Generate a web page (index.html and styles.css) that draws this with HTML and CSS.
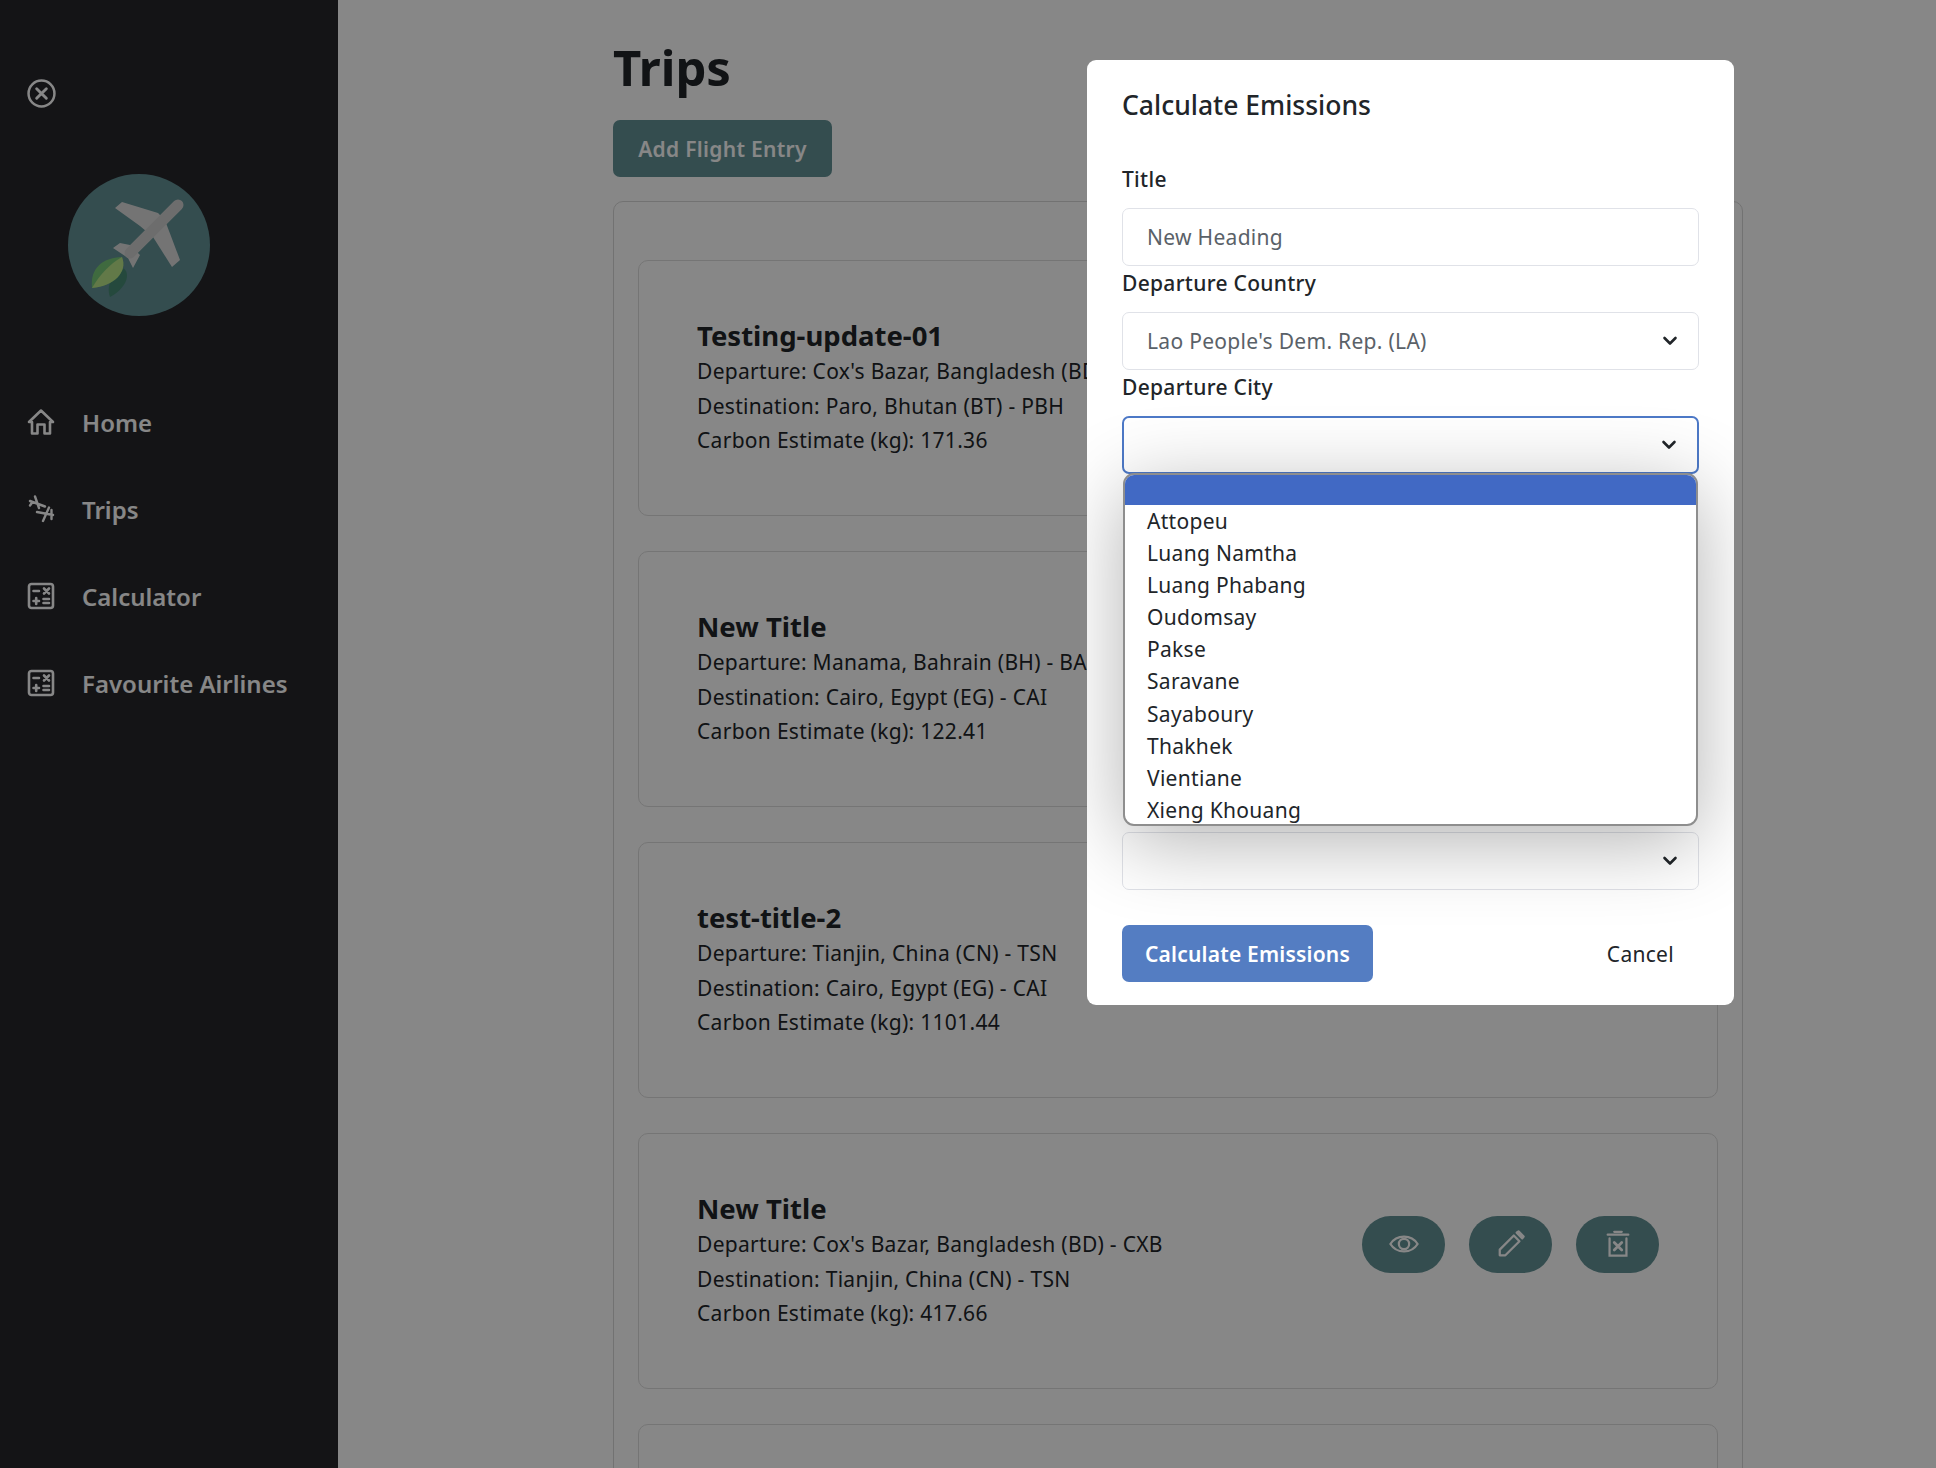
FILE: index.html
```html
<!DOCTYPE html>
<html lang="en">
<head>
  <meta charset="UTF-8" />
  <meta name="viewport" content="width=device-width, initial-scale=1.0" />
  <title>Trips</title>
  <link rel="stylesheet" href="styles.css">
</head>
<body>
  <div class="layout">
    <aside class="sidebar">
      <svg class="close-icon" viewBox="0 0 30 30" fill="none" stroke="#fff" stroke-width="2.600" stroke-linecap="round">
        <circle cx="15" cy="15" r="13.400"/>
        <path d="M10 10l10 10M20 10l-10 10" stroke-width="3"/>
      </svg>

      <svg class="logo" viewBox="0 0 142 142">
        <circle cx="71" cy="71" r="71" fill="#629195"/>
        <path d="M42 123C38 112 44 100 54 94C62 96 62 112 42 123Z" fill="#468a74"/>
        <path d="M24 114C22 94 34 84 54 83C60 98 46 112 24 114Z" fill="#78c878"/>
        <path d="M24 114C32 100 42 90 54 83C60 98 46 112 24 114Z" fill="#d6f08e" opacity=".7"/>
        <g fill="#dcdcdc">
          <path d="M47 34L54 28L90 39L99 48L85 63L72 52Z"/>
          <path d="M85 63L98 49L112 86L104 93Z"/>
          <path d="M45 74L52 69L62 71L72 81L65 94L60 84Z"/>
        </g>
        <path d="M110 31L62 79" stroke="#cfcfcf" stroke-width="11" stroke-linecap="round"/>
      </svg>

      <nav class="nav">
        <a class="nav-item">
          <svg class="nav-icon" viewBox="0 0 28 28" fill="none" stroke="#fff" stroke-width="2.600" stroke-linejoin="round" stroke-linecap="round">
            <path d="M2 14L14 2.500L26 14H23V25.500H17.500V16.500H10.500V25.500H5V14Z"/>
          </svg>
          Home
        </a>
        <a class="nav-item">
          <svg class="nav-icon" viewBox="0 0 28 28" fill="none" stroke="#fff" stroke-width="2.400" stroke-linecap="round" stroke-linejoin="round">
            <path d="M3 6L18 11.500M8 1.500L12 13M3 10.500L5.500 7"/>
            <path d="M10 17L26 20M22 12.500L16 26M24.500 15V24"/>
          </svg>
          Trips
        </a>
        <a class="nav-item">
          <svg class="nav-icon" viewBox="0 0 28 28" fill="none" stroke="#fff" stroke-width="2.600" stroke-linecap="round">
            <rect x="2" y="2" width="24" height="24" rx="2.500"/>
            <path d="M6.500 9H12M17 6.500L22 11.500M22 6.500L17 11.500M6.500 19H12M9.200 16V22M16.500 17H22M16.500 21H22"/>
          </svg>
          Calculator
        </a>
        <a class="nav-item">
          <svg class="nav-icon" viewBox="0 0 28 28" fill="none" stroke="#fff" stroke-width="2.600" stroke-linecap="round">
            <rect x="2" y="2" width="24" height="24" rx="2.500"/>
            <path d="M6.500 9H12M17 6.500L22 11.500M22 6.500L17 11.500M6.500 19H12M9.200 16V22M16.500 17H22M16.500 21H22"/>
          </svg>
          Favourite Airlines
        </a>
      </nav>
    </aside>

    <main class="content">
      <h1 class="page-title">Trips</h1>
      <button class="btn-add">Add Flight Entry</button>

      <section class="trip-list">
        <article class="trip-card">
          <div class="trip-info">
            <h2 class="trip-title">Testing-update-01</h2>
            <p>Departure: Cox's Bazar, Bangladesh (BD) - CXB</p>
            <p>Destination: Paro, Bhutan (BT) - PBH</p>
            <p>Carbon Estimate (kg): 171.36</p>
          </div>
        </article>
        <article class="trip-card">
          <div class="trip-info">
            <h2 class="trip-title">New Title</h2>
            <p>Departure: Manama, Bahrain (BH) - BAH</p>
            <p>Destination: Cairo, Egypt (EG) - CAI</p>
            <p>Carbon Estimate (kg): 122.41</p>
          </div>
        </article>
        <article class="trip-card">
          <div class="trip-info">
            <h2 class="trip-title">test-title-2</h2>
            <p>Departure: Tianjin, China (CN) - TSN</p>
            <p>Destination: Cairo, Egypt (EG) - CAI</p>
            <p>Carbon Estimate (kg): 1101.44</p>
          </div>
        </article>
        <article class="trip-card">
          <div class="trip-info">
            <h2 class="trip-title">New Title</h2>
            <p>Departure: Cox's Bazar, Bangladesh (BD) - CXB</p>
            <p>Destination: Tianjin, China (CN) - TSN</p>
            <p>Carbon Estimate (kg): 417.66</p>
          </div>
          <div class="trip-actions">
            <button class="btn-round">
              <svg viewBox="0 0 32 32" fill="none" stroke="#fff" stroke-width="2.400">
                <path d="M1.500 16C8 5.500 24 5.500 30.500 16C24 26.500 8 26.500 1.500 16Z"/>
                <circle cx="16" cy="16" r="5.500"/>
              </svg>
            </button>
            <button class="btn-round">
              <svg viewBox="0 0 32 32" fill="none" stroke="#fff" stroke-width="2.400" stroke-linejoin="round">
                <path d="M4 28V22L19 7L25 13L10 28Z"/>
                <path d="M22 4L24 2.500L29.500 8L28 10Z" fill="#fff"/>
              </svg>
            </button>
            <button class="btn-round">
              <svg viewBox="0 0 32 32" fill="none" stroke="#fff" stroke-width="2.400" stroke-linecap="round">
                <path d="M5 6H27M12 3H20"/>
                <path d="M7 10V28.500H25V10"/>
                <path d="M12 14.500L20 22.500M20 14.500L12 22.500" stroke-width="3"/>
              </svg>
            </button>
          </div>
        </article>
        <article class="trip-card"></article>
      </section>
    </main>
  </div>

  <div class="backdrop"></div>

  <div class="modal">
    <h3 class="modal-title">Calculate Emissions</h3>
    <form>
      <div class="field">
        <label>Title</label>
        <input class="control" type="text" placeholder="New Heading">
      </div>
      <div class="field">
        <label>Departure Country</label>
        <select class="control">
          <option>Lao People's Dem. Rep. (LA)</option>
        </select>
      </div>
      <div class="field field-open">
        <label>Departure City</label>
        <select class="control control-focus">
          <option></option>
        </select>
        <ul class="dropdown">
          <li class="selected"></li>
          <li>Attopeu</li>
          <li>Luang Namtha</li>
          <li>Luang Phabang</li>
          <li>Oudomsay</li>
          <li>Pakse</li>
          <li>Saravane</li>
          <li>Sayaboury</li>
          <li>Thakhek</li>
          <li>Vientiane</li>
          <li>Xieng Khouang</li>
        </ul>
      </div>
      <select class="control"><option></option></select>
      <div class="modal-footer">
        <button type="button" class="btn-primary">Calculate Emissions</button>
        <button type="button" class="btn-cancel">Cancel</button>
      </div>
    </form>
  </div>
</body>
</html>
```

FILE: styles.css
```css
* {
  box-sizing: border-box;
}

html, body {
  height: 100%;
}

body {
  margin: 0;
  overflow: hidden;
  font-family: "Noto Sans", "Open Sans", sans-serif;
  font-size: 21px;
  letter-spacing: 0.3px;
  color: #212529;
  background: #fff;
}

.layout {
  display: flex;
  min-height: 100%;
}

/* sidebar */
.sidebar {
  flex: 0 0 338px;
  min-height: 1468px;
  padding: 79px 27px 0;
  background: #26262a;
  color: #fff;
}

.close-icon {
  display: block;
  width: 29px;
  height: 29px;
}

.logo {
  display: block;
  width: 142px;
  height: 142px;
  margin: 66px 0 0 41px;
}

.nav {
  display: flex;
  flex-direction: column;
  gap: 53px;
  margin-top: 89px;
}

.nav-item {
  display: flex;
  align-items: center;
  gap: 27px;
  height: 34px;
  font-size: 24px;
  font-weight: 600;
  letter-spacing: 0;
  color: #fff;
}

.nav-icon {
  width: 28px;
  height: 28px;
  flex: none;
}

/* main column */
.content {
  flex: 1;
  padding: 33px 193px 0 275px;
}

.page-title {
  margin: 0;
  font-size: 49px;
  line-height: 68px;
  font-weight: 700;
  letter-spacing: 0;
  color: #212529;
}

.btn-add {
  display: block;
  width: 219px;
  height: 57px;
  margin-top: 19px;
  border: 0;
  border-radius: 7px;
  background: #629195;
  color: #fff;
  font-family: inherit;
  font-size: 21px;
  font-weight: 600;
  letter-spacing: 0.3px;
}

.trip-list {
  display: flex;
  flex-direction: column;
  gap: 35px;
  margin-top: 24px;
  padding: 58px 24px 0;
  border: 1px solid #d8d8d8;
  border-radius: 10px;
}

.trip-card {
  display: flex;
  align-items: center;
  justify-content: space-between;
  height: 256px;
  padding: 0 58px;
  border: 1px solid #dedede;
  border-radius: 10px;
}

.trip-title {
  margin: 0;
  font-size: 27.500px;
  line-height: 36px;
  font-weight: 700;
  letter-spacing: 0;
  color: #212529;
}

.trip-info p {
  margin: 0;
  line-height: 34.600px;
  white-space: nowrap;
}

.trip-actions {
  display: flex;
  gap: 24px;
  margin-bottom: 34px;
}

.btn-round {
  display: flex;
  align-items: center;
  justify-content: center;
  width: 83px;
  height: 57px;
  border: 0;
  border-radius: 29px;
  background: #629195;
}

.btn-round svg {
  width: 30px;
  height: 30px;
}

/* modal */
.backdrop {
  position: fixed;
  inset: 0;
  background: rgba(0, 0, 0, 0.47);
}

.modal {
  position: fixed;
  top: 60px;
  left: 1087px;
  width: 647px;
  height: 945px;
  padding: 21px 35px 0;
  overflow: hidden;
  border-radius: 9px;
  background: #fff;
}

.modal-title {
  margin: 0 0 33px;
  font-size: 26.500px;
  line-height: 48px;
  font-weight: 500;
  letter-spacing: 0;
  color: #212529;
}

.field {
  height: 104px;
}

.field-open {
  position: relative;
  margin-bottom: 358px;
}

.field label {
  display: block;
  height: 46px;
  font-size: 21px;
  font-weight: 500;
  line-height: 34px;
}

.control {
  display: block;
  width: 100%;
  height: 58px;
  padding: 0 24px;
  border: 1px solid #e0e2e8;
  border-radius: 7px;
  background-color: #fff;
  color: #5a6168;
  font-family: inherit;
  font-size: 21px;
  letter-spacing: 0.3px;
  outline: 0;
  appearance: none;
}

.control::placeholder {
  color: #5a6168;
}

select.control {
  background-image: url("data:image/svg+xml,%3csvg xmlns='http://www.w3.org/2000/svg' viewBox='0 0 16 16'%3e%3cpath fill='none' stroke='%23212529' stroke-linecap='round' stroke-linejoin='round' stroke-width='2.600' d='M2.500 5l5.500 5.500 5.500-5.500'/%3e%3c/svg%3e");
  background-repeat: no-repeat;
  background-position: right 20px center;
  background-size: 16px 16px;
}

.control-focus {
  border: 2.500px solid #4d79c7;
}

.dropdown {
  position: absolute;
  top: 103px;
  left: 1px;
  right: 1px;
  z-index: 2;
  height: 353px;
  margin: 0;
  padding: 0;
  overflow: hidden;
  list-style: none;
  border: 2px solid #8e8e8e;
  border-radius: 11px;
  background: #fff;
  box-shadow: 0 16px 80px rgba(0, 0, 0, 0.3);
}

.dropdown li {
  height: 32.100px;
  padding-left: 22px;
  font-size: 21px;
  line-height: 32px;
  color: #212529;
}

.dropdown .selected {
  height: 30px;
  background: #4169c4;
}

.modal-footer {
  display: flex;
  align-items: center;
  justify-content: space-between;
  margin-top: 35px;
}

.btn-primary {
  width: 251px;
  height: 57px;
  border: 0;
  border-radius: 7px;
  background: #547dc2;
  color: #fff;
  font-family: inherit;
  font-size: 21px;
  font-weight: 600;
  letter-spacing: 0.2px;
}

.btn-cancel {
  padding: 0 25px 0 0;
  border: 0;
  background: none;
  color: #212529;
  font-family: inherit;
  font-size: 21px;
  letter-spacing: 0.3px;
}
```
